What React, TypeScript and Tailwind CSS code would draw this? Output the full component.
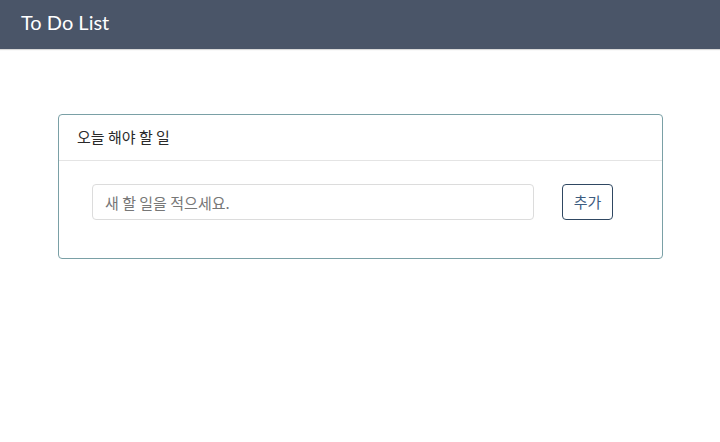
import React, { useState } from "react";

export default function App() {
  const [todo, setTodo] = useState("");

  return (
    <div className="min-h-[442px] w-full bg-white font-['Lato','Noto_Sans_CJK_KR',sans-serif]">
      <header className="flex h-[49px] items-center bg-[#4a5568] px-[21px] pb-[6px] shadow-[0_1px_1px_rgba(0,0,0,0.15)]">
        <h1 className="text-[20px] font-normal text-white">To Do List</h1>
      </header>

      <main className="px-[58px] pt-[65px]">
        <div className="w-[605px] rounded-[4px] border border-[#7aa0a6]">
          <div className="flex h-[46px] items-center border-b border-[#e4e4e4] px-[18px]">
            <h2 className="text-[15px] text-[#2a2a2a] font-['Noto_Sans_CJK_KR',sans-serif]">
              오늘 해야 할 일
            </h2>
          </div>
          <div className="flex items-center px-[33px] pb-[38px] pt-[23px]">
            <input
              value={todo}
              onChange={(e) => setTodo(e.target.value)}
              placeholder="새 할 일을 적으세요."
              className="h-[36px] w-[442px] rounded-[4px] border border-[#dcdcdc] px-[12px] text-[15px] text-[#333] font-['Noto_Sans_CJK_KR',sans-serif] placeholder:text-[#777] outline-none"
            />
            <button className="ml-[28px] h-[36px] w-[51px] rounded-[4px] border border-[#2f4862] text-[15px] text-[#3d5c80] font-['Noto_Sans_CJK_KR',sans-serif]">
              추가
            </button>
          </div>
        </div>
      </main>
    </div>
  );
}
